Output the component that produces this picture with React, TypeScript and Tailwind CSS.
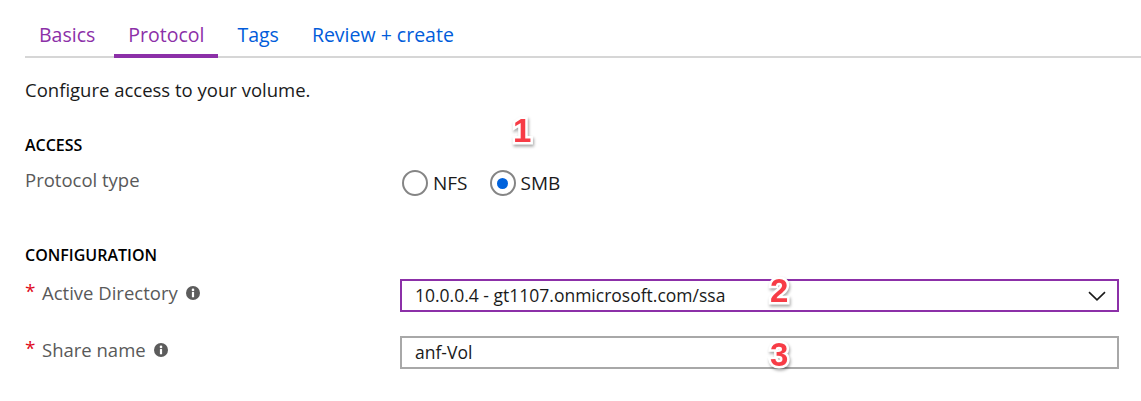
import React from "react";

const tabs = [
  { label: "Basics", color: "text-[#8c30a8]", active: false },
  { label: "Protocol", color: "text-[#8c30a8]", active: true },
  { label: "Tags", color: "text-[#015cda]", active: false },
  { label: "Review + create", color: "text-[#015cda]", active: false },
];

function InfoIcon() {
  return (
    <svg width="14" height="14" viewBox="0 0 14 14" className="ml-[8px] shrink-0">
      <circle cx="7" cy="7" r="7" fill="#5c5c5c" />
      <circle cx="7" cy="3.9" r="1.3" fill="#fff" />
      <rect x="5.9" y="5.9" width="2.2" height="5.4" rx="0.4" fill="#fff" />
    </svg>
  );
}

function Radio({ label, checked }: { label: string; checked?: boolean }) {
  return (
    <label className="flex items-center gap-[5px]">
      <span className="w-[26px] h-[26px] rounded-full border-2 border-[#858585] flex items-center justify-center">
        {checked && <span className="w-[11px] h-[11px] rounded-full bg-[#0062dc]" />}
      </span>
      <span className="leading-[28px] text-[19px] text-[#1a1a1a]">{label}</span>
    </label>
  );
}

function FieldLabel({ text }: { text: string }) {
  return (
    <div className="w-[375px] shrink-0 h-[28px] flex items-center text-[#595959]">
      <span className="text-[#e00b1c] text-[19px] w-[17px] leading-[28px] -translate-y-[2px]">*</span>
      <span className="leading-[28px]">{text}</span>
      <InfoIcon />
    </div>
  );
}

function Marker({ n, className }: { n: string; className: string }) {
  return (
    <span
      className={`absolute font-['Liberation_Sans',Arial,sans-serif] font-bold text-[33px] leading-[33px] text-[#f73c46] [paint-order:stroke_fill] [-webkit-text-stroke:5px_white] drop-shadow-[1px_2px_1.5px_rgba(0,0,0,0.35)] ${className}`}
    >
      {n}
    </span>
  );
}

export default function App() {
  return (
    <div className="relative w-[1141px] h-[401px] overflow-hidden bg-white pl-[25px] font-['Segoe_UI','Open_Sans',sans-serif] text-[18.5px] text-[#1a1a1a]">
      <div className="flex gap-[5px] border-b-2 border-[#d6d6d6]">
        {tabs.map((t) => (
          <div
            key={t.label}
            className={`px-[14px] pt-[21px] pb-[5px] text-[19.5px] leading-[28px] -mb-[2px] border-b-4 ${t.color} ${
              t.active ? "border-[#8c30a8]" : "border-transparent"
            }`}
          >
            {t.label}
          </div>
        ))}
      </div>

      <div className="pr-[22px]">
        <p className="mt-[18px] leading-[28px]">Configure access to your volume.</p>

        <h3 className="mt-[30px] text-[16px] leading-[22px] font-semibold text-black">ACCESS</h3>
        <div className="mt-[10px] flex items-start">
          <div className="w-[375px] shrink-0 leading-[28px] text-[#595959]">Protocol type</div>
          <div className="mt-[3px] ml-[2px] flex items-center gap-[22px]">
            <Radio label="NFS" />
            <Radio label="SMB" checked />
          </div>
        </div>

        <h3 className="mt-[47px] text-[16px] leading-[22px] font-semibold text-black">CONFIGURATION</h3>
        <div className="mt-[13px] flex items-start">
          <FieldLabel text="Active Directory" />
          <div className="flex-1 h-[33px] border-2 border-[#8c30a8] pl-[13px] pr-[10px] flex items-center justify-between">
            <span className="leading-[29px] text-[17.5px]">10.0.0.4 - gt1107.onmicrosoft.com/ssa</span>
            <svg width="18" height="10" viewBox="0 0 18 10" className="mr-[1px]">
              <path d="M1 1.2 L9 8.8 L17 1.2" fill="none" stroke="#1a1a1a" strokeWidth="1.6" />
            </svg>
          </div>
        </div>
        <div className="mt-[24px] flex items-start">
          <FieldLabel text="Share name" />
          <div className="flex-1 h-[33px] border-2 border-[#a8a8a8] pl-[13px] flex items-center">
            <span className="leading-[29px] text-[17.5px]">anf-Vol</span>
          </div>
        </div>
      </div>

      <Marker n="1" className="left-[513px] top-[114px]" />
      <Marker n="2" className="left-[770px] top-[274px]" />
      <Marker n="3" className="left-[770px] top-[338px]" />
    </div>
  );
}
